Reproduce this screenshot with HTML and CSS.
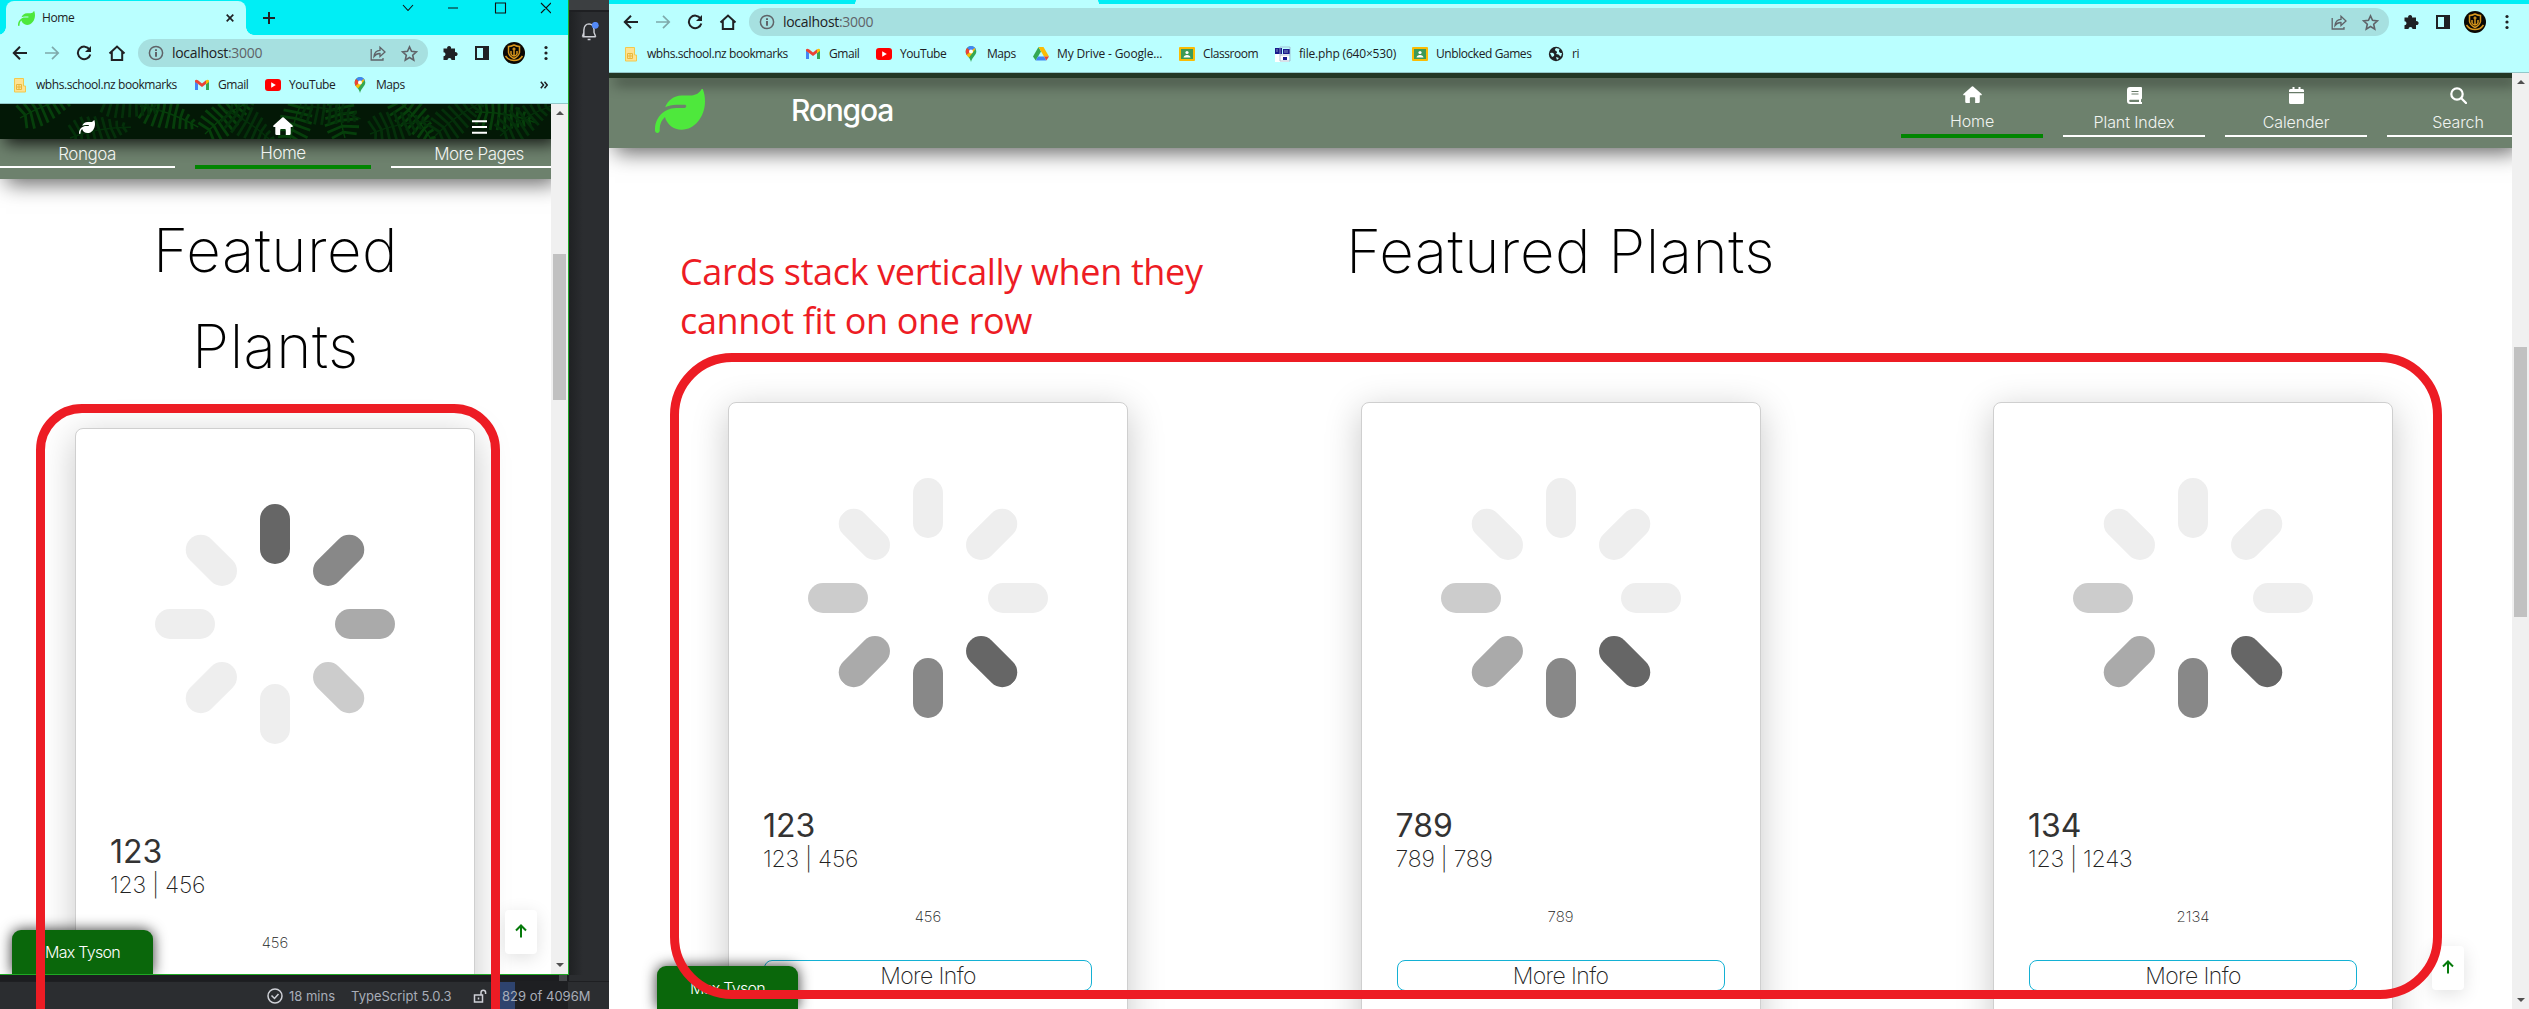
FILE: index.html
```html
<!DOCTYPE html>
<html lang="en">
<head>
<meta charset="utf-8">
<title>Home</title>
<link rel="stylesheet" href="styles.css">
</head>
<body>
<svg class="defs" aria-hidden="true">
  <defs>
    <symbol id="leaf" viewBox="0 0 512 512"><path d="M272 96c-78.600 0-145.100 51.500-167.700 122.500c33.600-17 71.500-26.500 111.700-26.500h88c8.800 0 16 7.200 16 16s-7.200 16-16 16H216c-16.600 0-32.700 1.900-48.200 5.400c-25.900 5.900-50 16.400-71.400 30.700C38.300 298.800 0 364.900 0 440v16c0 13.300 10.700 24 24 24s24-10.700 24-24V440c0-48.700 20.700-92.500 53.800-123.200C121.600 392.300 190.300 448 272 448l1 0c132.100-.7 239-130.900 239-291.400c0-42.600-7.500-83.100-21.100-119.600c-2.600-6.900-12.700-6.600-16.200-.1C455.900 72.100 418.700 96 376 96L272 96z"/></symbol>
    <symbol id="house" viewBox="0 0 20 18"><path d="M9.300.4Q10 0 10.700.4L19.600 8.400Q20.400 9.600 19 9.900H17.700V16.700Q17.700 18 16.500 18H12.800V13Q12.800 12 11.900 12H8.100Q7.200 12 7.200 13V18H3.500Q2.300 18 2.300 16.700V9.900H1Q-.4 9.600.4 8.400Z"/></symbol>
    <symbol id="back" viewBox="0 0 16 16"><path d="M15 8H2M8 1.800 1.800 8 8 14.200" fill="none" stroke="currentColor" stroke-width="2"/></symbol>
    <symbol id="forward" viewBox="0 0 16 16"><path d="M1 8h13M8 1.800 14.200 8 8 14.200" fill="none" stroke="currentColor" stroke-width="1.700"/></symbol>
    <symbol id="reload" viewBox="0 0 16 16"><path d="M13.500 4.500A6.300 6.300 0 1 0 14.300 9.500" fill="none" stroke="currentColor" stroke-width="2"/><path d="M15 1v6H9z"/></symbol>
    <symbol id="home" viewBox="0 0 18 16"><path d="M1.500 8.500 9 1.500l7.500 7M3.800 7v8h10.400V7" fill="none" stroke="currentColor" stroke-width="2"/></symbol>
    <symbol id="info" viewBox="0 0 16 16"><circle cx="8" cy="8" r="6.600" fill="none" stroke="currentColor" stroke-width="1.500"/><path d="M7 7h2v4.800H7zM7 4.200h2v1.800H7z"/></symbol>
    <symbol id="share" viewBox="0 0 16 16"><path d="M1.200 4v11H13v-2M4 11.500C4.400 7.500 6.500 5.500 10 5.300V2.200L15 7l-5 4.600V8.500C7.500 8.400 5.500 9.500 4 11.500Z" fill="none" stroke="currentColor" stroke-width="1.300"/></symbol>
    <symbol id="star" viewBox="0 0 16 16"><path d="M8 1.800 9.900 6l4.600.5L11 9.600l1 4.600-4-2.400-4 2.400 1-4.600L1.500 6.500 6.100 6Z" fill="none" stroke="currentColor" stroke-width="1.500"/></symbol>
    <symbol id="puzzle" viewBox="0 0 16 16"><path d="M1.500 3.500H5.200a2 2 0 1 1 3.800 0H13V7.200a2 2 0 1 1 0 3.800V15H9.500a2 2 0 0 0-4 0H1.500V11.300a2 2 0 0 0 0-4z"/></symbol>
    <symbol id="panel" viewBox="0 0 16 16"><path d="M1 1h14v14H1zM3 3v10h6V3z" fill-rule="evenodd"/></symbol>
    <symbol id="dots" viewBox="0 0 4 16"><circle cx="2" cy="2.500" r="1.600"/><circle cx="2" cy="8" r="1.600"/><circle cx="2" cy="13.500" r="1.600"/></symbol>
    <symbol id="crest" viewBox="0 0 22 22"><circle cx="11" cy="11" r="11" fill="#0a0804"/><g fill="none" stroke="#d6951c" stroke-width="1.500"><path d="M5.500 4.500Q8 4.500 11 3q3 1.500 5.500 1.500v6Q16 14 11 16.500 6 14 5.500 10.500z"/><path d="M11 5.500v8.500M8 9v3q1 2 3 2t3-2V9M9.500 7h3M2.500 14q3 4.500 8.500 4.500t8.500-4.500"/></g></symbol>
    <symbol id="folder" viewBox="0 0 16 16"><path d="M2.500 1.500h9V9h2v6h-11z" fill="#fde293" stroke="#f2c94c"/><path d="M4.500 7.500h5v5h-5zM7 7.500v5M4.500 10h5" fill="none" stroke="#e8b83c" stroke-width="1"/></symbol>
    <symbol id="gmail" viewBox="0 0 16 16"><path d="M1 4v9h3V7z" fill="#4285f4"/><path d="M15 4v9h-3V7z" fill="#34a853"/><path d="M1 3.500Q2 2 4 3.300L8 6.500l4-3.200V7L8 10 4 7 1 5z" fill="#ea4335"/><path d="M12 3.300Q14 2 15 3.500V5l-3 2.200z" fill="#fbbc04"/></symbol>
    <symbol id="youtube" viewBox="0 0 16 16"><rect y="2" width="16" height="12" rx="3" fill="#f00"/><path d="m6.200 5.300 4.600 2.700-4.600 2.700z" fill="#fff"/></symbol>
    <symbol id="maps" viewBox="0 0 16 16"><path d="M8 0a5.400 5.400 0 0 1 5.300 5.500C13.300 9 9.200 11 8 16 7 11 2.700 9.500 2.700 5.500A5.400 5.400 0 0 1 8 0z" fill="#34a853"/><path d="M8 0a5.400 5.400 0 0 1 5 3.500L8 5.500 4 2Q5.500 0 8 0z" fill="#4285f4"/><path d="M4 2 8 5.500 3.500 9Q2.500 7 2.700 5 2.800 3.200 4 2z" fill="#ea4335"/><path d="m3.500 9 8-7 1 1L6 11.500z" fill="#fbbc04"/><circle cx="8" cy="5.500" r="2" fill="#fff"/></symbol>
    <symbol id="drive" viewBox="0 0 16 16"><path d="M5.500 1 0 10.500 2.700 14.500 8 5.500z" fill="#34a853"/><path d="M5.500 1h5L16 10.500h-5z" fill="#fbbc04"/><path d="M5 10.500h6l2.300 4H2.700z" fill="#4285f4"/><path d="M11 10.500h5l-2.700 4z" fill="#ea4335"/></symbol>
    <symbol id="classroom" viewBox="0 0 16 16"><rect y="1" width="16" height="14" rx="1" fill="#fbbc04"/><path d="M2 3h12v10H2z" fill="#3d9a57"/><circle cx="8" cy="6.500" r="1.600" fill="#fff"/><path d="M4.500 11.500Q5 9 8 9t3.500 2.500z" fill="#fff"/></symbol>
    <symbol id="php" viewBox="0 0 16 16"><path d="M0 8h14v8H0z" fill="#fff"/><path d="M0 2h7v6H0zM8 3h7v5H8zM8 11h4v3H8z" fill="#1a1a8c"/><path d="M5 1h10v14H5zM5 9h10M2 3v3M10 4v3M12 4v3" fill="none" stroke="#9fb3c9" stroke-width=".8"/></symbol>
    <symbol id="globe" viewBox="0 0 16 16"><circle cx="8" cy="8" r="7.200" fill="#202124"/><path d="M2 7q3-1 4 1t-2 3zM8 2q-2 2 0 3t0 3q3 0 4 2t2-3q-3 0-3-2t1-2zM8 11l3 1-2 2z" fill="#baffff"/></symbol>
    <symbol id="spinner" viewBox="-120 -120 240 240">
      <rect id="spoke" x="-15" y="-120" width="30" height="60" rx="15"/>
      <use href="#spoke" transform="rotate(45)" class="s2"/>
      <use href="#spoke" transform="rotate(90)" class="s3"/>
      <use href="#spoke" transform="rotate(135)" class="s4"/>
      <use href="#spoke" transform="rotate(180)" class="s5"/>
      <use href="#spoke" transform="rotate(225)" class="s5"/>
      <use href="#spoke" transform="rotate(270)" class="s5"/>
      <use href="#spoke" transform="rotate(315)" class="s5"/>
    </symbol>
    <g id="frond" fill="none" stroke="currentColor">
      <path d="M0 0Q30-6 62 0" stroke-width="1.400"/>
      <path d="M6-1 1-13M12-2 7-17M18-3 14-19M24-3 21-18M30-4 28-17M36-4 35-15M42-3 42-12M48-3 49-9M54-2 56-6M6-1 3 12M12-2 10 15M18-3 18 15M24-3 25 14M30-4 32 12M36-4 39 10M42-3 45 8M48-3 51 6M54-2 57 4" stroke-width="2.800"/>
    </g>
  </defs>
</svg>

<main class="screen">
  <section class="desk">
    <div class="desk-top">
      <div class="window window-small">
        <div class="tabstrip">
          <div class="tab">
            <svg class="tab-icon"><use href="#leaf"/></svg><span class="tab-title">Home</span>
            <svg class="tab-close" viewBox="0 0 8 8"><path d="m.7.7 6.600 6.600M7.300.7.7 7.300"/></svg>
          </div>
          <svg class="tab-new" viewBox="0 0 12 12"><path d="M6 0v12M0 6h12"/></svg>
          <svg class="controls" viewBox="0 0 150 14"><path d="m2 4 5 5.500L12 4M47 7h10M94.500 2h10v10h-10zM140 2l10 10M150 2l-10 10"/></svg>
        </div>
        <div class="toolbar">
          <svg class="ic"><use href="#back"/></svg><svg class="ic dim"><use href="#forward"/></svg><svg class="ic"><use href="#reload"/></svg><svg class="ic ic-home"><use href="#home"/></svg>
          <div class="omnibox">
            <svg class="ic"><use href="#info"/></svg><span class="url">localhost<i>:3000</i></span>
            <svg class="ic push"><use href="#share"/></svg><svg class="ic ic-star"><use href="#star"/></svg>
          </div>
          <svg class="ic"><use href="#puzzle"/></svg><svg class="ic"><use href="#panel"/></svg><svg class="ic-crest"><use href="#crest"/></svg><svg class="ic-dots"><use href="#dots"/></svg>
        </div>
        <div class="bookmarks">
          <span class="bm b-wbhs"><svg><use href="#folder"/></svg>wbhs.school.nz bookmarks</span>
          <span class="bm b-gmail"><svg><use href="#gmail"/></svg>Gmail</span>
          <span class="bm b-yt"><svg><use href="#youtube"/></svg>YouTube</span>
          <span class="bm b-maps"><svg><use href="#maps"/></svg>Maps</span>
          <svg class="more" viewBox="0 0 8 8"><path d="m.8.800L3.500 4 .8 7.200M4.500.8 7.200 4 4.500 7.200"/></svg>
        </div>
        <div class="view">
          <div class="page">
            <nav class="nav">
              <div class="nav-back">
                <div class="hero">
                  <svg class="ferns" viewBox="0 0 551 35">
                    <g color="#063f0b"><use href="#frond" transform="translate(20 14) rotate(-20)"/><use href="#frond" transform="translate(140 2) rotate(20)"/><use href="#frond" transform="translate(205 30) rotate(-35)"/><use href="#frond" transform="translate(290 38) rotate(-70)"/><use href="#frond" transform="translate(345 34) rotate(-95)"/><use href="#frond" transform="translate(395 -6) rotate(50)"/><use href="#frond" transform="translate(475 8) rotate(10)"/></g>
                    <g color="#04300a"><use href="#frond" transform="translate(70 34) rotate(-10)"/><use href="#frond" transform="translate(100 -4) rotate(10)"/><use href="#frond" transform="translate(225 6) rotate(35)"/><use href="#frond" transform="translate(300 2) rotate(12)"/><use href="#frond" transform="translate(370 30) rotate(-12)"/><use href="#frond" transform="translate(435 32) rotate(-35)"/><use href="#frond" transform="translate(500 32) rotate(-30)"/></g>
                  </svg>
                </div>
              </div>
              <a class="item"><svg class="n-leaf"><use href="#leaf"/></svg><span>Rongoa</span></a>
              <a class="item active"><svg class="n-house"><use href="#house"/></svg><span>Home</span></a>
              <a class="item"><svg class="n-bars" viewBox="0 0 15 14"><path d="M0 1.200h15M0 7h15M0 12.800h15" stroke="#fff" stroke-width="2"/></svg><span>More Pages</span></a>
            </nav>
            <h1>Featured<br>Plants</h1>
            <div class="cards">
              <article class="card"><svg class="loader"><use href="#spinner"/></svg><h2>123</h2><p class="sub">123 | 456</p><p class="desc">456</p><a class="btn">More Info</a></article>
            </div>
            <div class="user">Max Tyson</div>
            <div class="totop"><svg viewBox="0 0 12 14"><path d="M6 13.500V1.500M1 6.500l5-5 5 5"/></svg></div>
          </div>
          <div class="scroll"><i class="up"></i><b></b><i class="down"></i></div>
        </div>
      </div>
      <div class="ide-side">
        <svg class="bell" viewBox="0 0 20 20"><path d="M1.500 15.500h14M3 15V8.500Q3.500 2 8.500 2 13 2.200 13.700 8V11l1.800 4.500M1.500 15.500 3 11M7 18.500h3" fill="none" stroke="#ced0d6" stroke-width="1.500"/><circle cx="15" cy="3.500" r="3.600" fill="#548af7"/></svg>
      </div>
    </div>
    <div class="ide-gap"></div>
    <div class="status">
      <svg class="st-check" viewBox="0 0 16 16"><circle cx="8" cy="8" r="7"/><path d="m4.500 7.500 3 3 4-4.500"/></svg><span>18 mins</span><span class="ts">TypeScript 5.0.3</span>
      <svg class="st-lock" viewBox="0 0 14 14"><path d="M1.500 6h8v7h-8zM8 6V3.500a2.300 2.300 0 0 1 4.600 0V5M5.500 8.500v2"/></svg>
      <span class="mem">829 of 4096M</span>
    </div>
  </section>

  <section class="window window-wide">
    <div class="tabstrip"><div class="tab"></div></div>
    <div class="toolbar">
      <svg class="ic"><use href="#back"/></svg><svg class="ic dim"><use href="#forward"/></svg><svg class="ic"><use href="#reload"/></svg><svg class="ic ic-home"><use href="#home"/></svg>
      <div class="omnibox">
        <svg class="ic"><use href="#info"/></svg><span class="url">localhost<i>:3000</i></span>
        <svg class="ic push"><use href="#share"/></svg><svg class="ic ic-star"><use href="#star"/></svg>
      </div>
      <svg class="ic"><use href="#puzzle"/></svg><svg class="ic"><use href="#panel"/></svg><svg class="ic-crest"><use href="#crest"/></svg><svg class="ic-dots"><use href="#dots"/></svg>
    </div>
    <div class="bookmarks">
      <span class="bm b-wbhs"><svg><use href="#folder"/></svg>wbhs.school.nz bookmarks</span>
      <span class="bm b-gmail"><svg><use href="#gmail"/></svg>Gmail</span>
      <span class="bm b-yt"><svg><use href="#youtube"/></svg>YouTube</span>
      <span class="bm b-maps"><svg><use href="#maps"/></svg>Maps</span>
      <span class="bm b-drive"><svg><use href="#drive"/></svg>My Drive - Google...</span>
      <span class="bm b-class"><svg><use href="#classroom"/></svg>Classroom</span>
      <span class="bm b-php"><svg><use href="#php"/></svg>file.php (640×530)</span>
      <span class="bm b-games"><svg><use href="#classroom"/></svg>Unblocked Games</span>
      <span class="bm"><svg><use href="#globe"/></svg>ri</span>
    </div>
    <div class="view">
      <div class="page">
        <nav class="nav">
          <div class="nav-back"><div class="hero"></div></div>
          <svg class="logo"><use href="#leaf"/></svg><span class="brand">Rongoa</span>
          <a class="item active"><svg class="n-house"><use href="#house"/></svg><span>Home</span></a>
          <a class="item"><svg class="n-book" viewBox="0 0 15 17"><path fill-rule="evenodd" d="M3 0H14Q15 0 15 1V11.500L14 12.500V15H15V17H3Q0 17 0 14V3Q0 0 3 0zM3 12.700a1.200 1.200 0 0 0 0 2.300H12V12.700zM4.500 4h7v1h-7zM4.500 6.500h7v1h-7z"/></svg><span>Plant Index</span></a>
          <a class="item"><svg class="n-cal" viewBox="0 0 15 17"><path d="M3.500 0h2v2h4V0h2v2H13.500Q15 2 15 3.500V5H0V3.500Q0 2 1.500 2h2zM0 6.300h15V15.500Q15 17 13.500 17h-12Q0 17 0 15.500z"/></svg><span>Calender</span></a>
          <a class="item"><svg class="n-search" viewBox="0 0 17 17"><path d="m11.500 11.500 4.500 4.500" stroke="#fff" stroke-width="2.300" stroke-linecap="round"/><circle cx="7" cy="7" r="5.700" fill="none" stroke="#fff" stroke-width="2.200"/></svg><span>Search</span></a>
        </nav>
        <h1>Featured Plants</h1>
        <div class="cards">
          <article class="card"><svg class="loader turned"><use href="#spinner"/></svg><h2>123</h2><p class="sub">123 | 456</p><p class="desc">456</p><a class="btn">More Info</a></article>
          <article class="card"><svg class="loader turned"><use href="#spinner"/></svg><h2>789</h2><p class="sub">789 | 789</p><p class="desc">789</p><a class="btn">More Info</a></article>
          <article class="card"><svg class="loader turned"><use href="#spinner"/></svg><h2>134</h2><p class="sub">123 | 1243</p><p class="desc">2134</p><a class="btn">More Info</a></article>
        </div>
        <div class="user">Max Tyson</div>
        <div class="totop"><svg viewBox="0 0 12 14"><path d="M6 13.500V1.500M1 6.500l5-5 5 5"/></svg></div>
      </div>
      <div class="scroll"><i class="up"></i><b></b><i class="down"></i></div>
    </div>
  </section>

  <div class="mark mark-small"></div>
  <div class="mark mark-wide"></div>
  <p class="note">Cards stack vertically when they<br>cannot fit on one row</p>
</main>
</body>
</html>
```

FILE: styles.css
```css
* { box-sizing: border-box; }
body { margin: 0; font-family: Inter, "Liberation Sans", sans-serif; }
svg { display: block; flex: none; }
h1, h2, p { margin: 0; }
.defs { position: absolute; width: 0; height: 0; }

.screen { position: relative; display: flex; width: 2529px; height: 1009px; overflow: hidden; background: #fff; }
.desk { display: flex; flex-direction: column; width: 609px; flex: none; background: #2b2d30; }
.desk-top { display: flex; height: 975px; flex: none; }
.window { display: flex; flex-direction: column; overflow: hidden; background: #fff; }
.window-small { width: 569px; border-right: 1px solid #1fa824; border-bottom: 1px solid #1fa824; }
.window-wide { width: 1920px; height: 1009px; }

/* IDE behind the small window */
.ide-side { flex: 1; padding: 22px 0 0 12px; background: linear-gradient(#3c3f41 0 10px, #1e1f22 10px 12px, transparent 12px), linear-gradient(90deg, #1f2123, #2b2d30 14px); }
.bell { width: 19px; height: 19px; }
.ide-gap { height: 7px; flex: none; background: linear-gradient(90deg, transparent 559px, #46484b 559px 567px, transparent 567px), linear-gradient(90deg, #1c1d20 569px, #2b2d30 569px); border-bottom: 1px solid #1e1f22; }
.status { display: flex; align-items: center; flex: 1; padding-left: 267px; font-size: 13px; color: #a8adb8; white-space: nowrap; }
.status svg { fill: none; stroke: #ced0d6; stroke-width: 1.5; }
.st-check { width: 16px; height: 16px; margin-right: 6px; }
.ts { margin-left: 16px; width: 104px; }
.st-lock { width: 14px; height: 14px; margin-left: 18px; }
.mem { align-self: stretch; display: flex; align-items: center; margin-left: 12px; padding-left: 3px; width: 110px; background: linear-gradient(90deg, #2e436e 16px, #1e1f22 16px 69px, transparent 69px); }

/* Browser chrome */
.tabstrip { display: flex; flex: none; background: #00eef5; }
.window-small .tabstrip { height: 35px; padding: 1px 17px 0 6px; }
.tab { position: relative; display: flex; align-items: center; background: #baffff; }
.window-small .tab { width: 240px; height: 34px; padding: 0 12px; border-radius: 8px 8px 0 0; }
.tab::before, .tab::after { content: ""; position: absolute; bottom: 0; width: 8px; height: 8px; }
.tab::before { left: -8px; background: radial-gradient(circle at 0 0, transparent 7.5px, #baffff 8px); }
.tab::after { right: -8px; background: radial-gradient(circle at 100% 0, transparent 7.5px, #baffff 8px); }
.tab-icon { width: 17px; height: 17px; fill: #4ee83c; }
.tab-title { margin-left: 7px; font: 12px/16px "Open Sans", sans-serif; letter-spacing: -.4px; color: #202124; }
.tab-close { width: 8px; height: 8px; margin-left: auto; stroke: #202124; stroke-width: 1.7; }
.tab-new { width: 12px; height: 12px; margin: 11px 0 0 17px; stroke: #202124; stroke-width: 2; }
.controls { width: 150px; height: 14px; margin-left: auto; fill: none; stroke: #111; stroke-width: 1.1; }
.window-wide .tabstrip { height: 4px; padding-left: 247px; }
.window-wide .tab { width: 242px; }
.window-wide .tab::before, .window-wide .tab::after { height: 4px; }

.toolbar { display: flex; align-items: center; height: 36px; flex: none; background: #baffff; padding-left: 12px; color: #202124; fill: #202124; }
.window-wide .toolbar { padding-left: 14px; }
.ic { width: 16px; height: 16px; margin-right: 16px; }
.dim { color: #7fa9ab; }
.ic-home { width: 18px; margin-right: 12px; }
.omnibox { display: flex; align-items: center; height: 28px; margin-right: 14px; padding: 0 10px; border-radius: 14px; background: #a6e0e0; color: #5f6368; fill: #5f6368; }
.window-small .omnibox { width: 290px; }
.window-wide .omnibox { width: 1640px; }
.omnibox .ic { margin-right: 8px; }
.omnibox .push { margin-left: auto; margin-right: 15px; }
.omnibox .ic-star { width: 17px; height: 17px; margin-right: 0; }
.url { font: 14px/20px "Open Sans", sans-serif; letter-spacing: -.3px; color: #202124; }
.url i { font-style: normal; color: #5f6368; }
.ic-crest { width: 22px; height: 22px; margin: 0 19px 0 -3px; }
.ic-dots { width: 4px; height: 16px; }

.bookmarks { display: flex; align-items: center; gap: 17px; height: 33px; flex: none; padding: 0 20px 4px 12px; background: #baffff; border-bottom: 1px solid #93c8ca; }
.window-wide .bookmarks { padding-left: 14px; }
.bm { display: flex; align-items: center; gap: 8px; font: 12px/16px "Open Sans", sans-serif; letter-spacing: -.43px; white-space: nowrap; color: #202124; }
.bm svg { width: 16px; height: 16px; }
.b-wbhs { width: 165px; }
.b-gmail { width: 54px; }
.b-yt { width: 70px; }
.b-maps { width: 53px; }
.b-drive { width: 129px; letter-spacing: -.15px; }
.b-class { width: 79px; }
.b-php { width: 120px; letter-spacing: -.18px; }
.b-games { width: 119px; }
.more { width: 8px; height: 8px; margin-left: auto; fill: none; stroke: #202124; stroke-width: 1.5; }

/* Site */
.view { display: flex; flex: 1; min-height: 0; }
.page { position: relative; flex: 1; min-width: 0; overflow: hidden; }
.scroll { position: relative; width: 17px; flex: none; background: #f0f0f0; }
.scroll b { position: absolute; left: 2px; width: 13px; background: #c1c1c1; }
.window-small .scroll b { top: 150px; height: 146px; }
.window-wide .scroll b { top: 274px; height: 270px; }
.scroll i { position: absolute; left: 5px; border: 4px solid transparent; border-width: 0 4px; }
.scroll .up { top: 7px; border-bottom: 4px solid #505050; }
.scroll .down { bottom: 7px; border-top: 4px solid #505050; }

.nav { position: relative; display: flex; gap: 20px; height: 75px; background: #6d816d; box-shadow: 6px 5px 20px rgba(0, 0, 0, .6); color: #f1f4f1; fill: #fff; }
.nav-back { position: absolute; inset: 0; overflow: hidden; }
.hero { height: 5px; background: #243725; box-shadow: 5px 5px 14px rgba(0, 0, 0, .75); }
.window-small .hero { height: 35px; background: #031806; box-shadow: 5px 5px 16px rgba(0, 0, 0, .8); }
.ferns { width: 551px; height: 35px; }
.item { position: relative; display: flex; flex-direction: column; align-items: center; flex: none; border-bottom: 2px solid #fff; font-weight: 300; white-space: nowrap; }
.item.active { border-bottom: 4px solid #008500; }
.item svg { margin-bottom: auto; }
.window-small .item { width: 176px; height: 64px; padding: 15px 0 2px; font-size: 17px; line-height: 20px; letter-spacing: -.5px; }
.window-small .item:nth-of-type(1) { margin-left: -1px; }
.window-small .item.active { height: 65px; padding-top: 13px; }
.window-wide .item { width: 142px; height: 64px; padding: 14px 0 3px; font-size: 16px; line-height: 20px; letter-spacing: -.1px; }
.window-wide .item.active { height: 65px; padding-top: 13px; }
.n-leaf { width: 16px; height: 16px; }
.n-house { width: 20px; height: 18px; }
.window-wide .n-house { width: 19px; height: 17px; }
.n-bars { width: 15px; height: 14px; margin-top: 1px; }
.n-book, .n-cal { width: 15px; height: 17px; }
.n-search { width: 17px; height: 17px; }
.logo { position: relative; width: 50px; height: 50px; margin: 13px 0 0 46px; fill: #4ee83c; }
.brand { position: relative; width: 1090px; flex: none; margin-left: 66px; font-size: 30px; line-height: 75px; font-weight: 500; letter-spacing: -1.2px; color: #fff; }

h1 { font-size: 60px; font-weight: 200; line-height: 96px; text-align: center; letter-spacing: .5px; color: #000; }
.window-small h1 { height: 249px; padding-top: 23px; }
.window-wide h1 { height: 254px; padding-top: 55px; }
.cards { display: flex; }
.window-small .cards { padding-left: 75px; }
.window-wide .cards { padding-left: 119px; gap: 232.5px; }
.card { display: flex; flex-direction: column; width: 400px; height: 700px; flex: none; padding: 0 36px; border: 1px solid #cfcfcf; border-radius: 8px; background: #fff; box-shadow: 0 8px 36px rgba(0, 0, 0, .22); font-weight: 200; color: #222; }
.loader { width: 240px; height: 240px; margin: 75px auto 0; fill: #666; }
.turned { transform: rotate(135deg); }
.s2 { fill: #888; }
.s3 { fill: #aaa; }
.s4 { fill: #ccc; }
.s5 { fill: #eee; }
.card h2 { margin: 88px 0 0 -2px; font-size: 32px; font-weight: 400; line-height: 39px; color: #333; }
.sub { margin-left: -2px; font-size: 23px; line-height: 28px; letter-spacing: -.2px; }
.desc { margin-top: 34px; font-size: 15px; line-height: 20px; text-align: center; }
.btn { height: 31px; margin: 33px -1px 0; border: 1px solid #14b1d4; border-radius: 8px; font-size: 23px; line-height: 31px; letter-spacing: -.6px; text-align: center; }
.user { position: absolute; left: 12px; bottom: 0; width: 141px; height: 44px; padding-top: 11px; border-radius: 9px 9px 0 0; background: #0a670b; box-shadow: 0 0 14px rgba(0, 0, 0, .8); color: #fff; font-size: 16px; font-weight: 300; line-height: 22px; letter-spacing: -.7px; text-align: center; }
.window-wide .user { left: 48px; height: 43px; }
.totop { position: absolute; right: 14px; bottom: 20px; width: 32px; height: 44px; padding: 14px 10px; border-radius: 4px; background: #fff; box-shadow: 0 4px 18px rgba(0, 0, 0, .12); }
.window-wide .totop { right: 48px; bottom: 19px; }
.totop svg { width: 12px; height: 14px; fill: none; stroke: #067a0b; stroke-width: 2; }

/* Red mark-up laid over both windows */
.mark { position: absolute; border: 9px solid #ed1c24; }
.mark-small { left: 36px; top: 404px; width: 464px; height: 700px; border-radius: 46px; }
.mark-wide { left: 670px; top: 353px; width: 1772px; height: 646px; border-radius: 62px; }
.note { position: absolute; left: 680px; top: 247px; font: 36px/49px "Open Sans", sans-serif; letter-spacing: -.35px; white-space: nowrap; color: #ed1c24; }
```
